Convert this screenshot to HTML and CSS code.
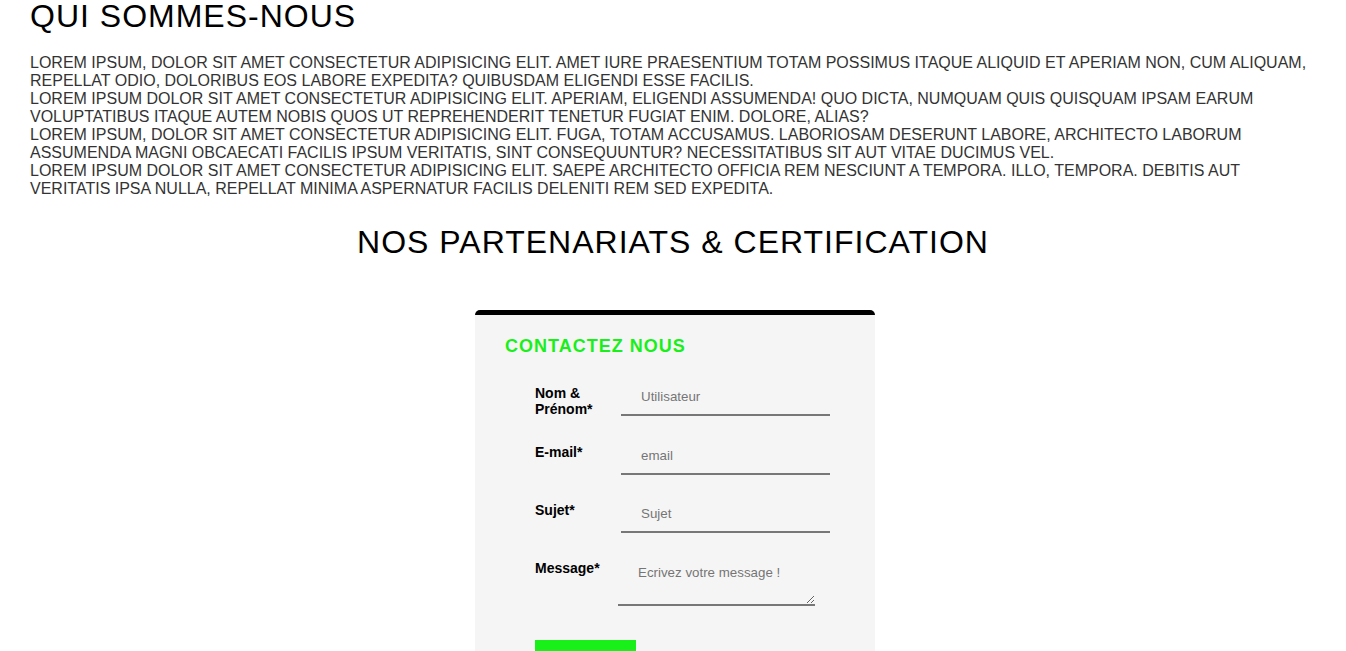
FILE: index.html
```html
<!DOCTYPE html>
<html lang="fr">
<head>
<meta charset="utf-8">
<title>Qui sommes-nous</title>
<link rel="stylesheet" href="styles.css">
</head>
<body>
<section class="about">
  <h1 class="about-title">QUI SOMMES-NOUS</h1>
  <div class="about-text">
    <p>Lorem ipsum, dolor sit amet consectetur adipisicing elit. Amet iure praesentium totam possimus itaque aliquid et aperiam non, cum aliquam, repellat odio, doloribus eos labore expedita? Quibusdam eligendi esse facilis.</p>
    <p>Lorem ipsum dolor sit amet consectetur adipisicing elit. Aperiam, eligendi assumenda! Quo dicta, numquam quis quisquam ipsam earum voluptatibus itaque autem nobis quos ut reprehenderit tenetur fugiat enim. Dolore, alias?</p>
    <p>Lorem ipsum, dolor sit amet consectetur adipisicing elit. Fuga, totam accusamus. Laboriosam deserunt labore, architecto laborum assumenda magni obcaecati facilis ipsum veritatis, sint consequuntur? Necessitatibus sit aut vitae ducimus vel.</p>
    <p>Lorem ipsum dolor sit amet consectetur adipisicing elit. Saepe architecto officia rem nesciunt a tempora. Illo, tempora. Debitis aut veritatis ipsa nulla, repellat minima aspernatur facilis deleniti rem sed expedita.</p>
  </div>
</section>
<section class="partners">
  <h2 class="partners-title">NOS PARTENARIATS &amp; CERTIFICATION</h2>
</section>
<section class="contact-wrap">
  <form class="contact">
    <h3 class="contact-title">CONTACTEZ NOUS</h3>
    <div class="row">
      <label class="lbl" for="nom">Nom &amp; Prénom*</label>
      <input class="field" id="nom" type="text" placeholder="Utilisateur">
    </div>
    <div class="row">
      <label class="lbl" for="email">E-mail*</label>
      <input class="field" id="email" type="email" placeholder="email">
    </div>
    <div class="row">
      <label class="lbl" for="sujet">Sujet*</label>
      <input class="field" id="sujet" type="text" placeholder="Sujet">
    </div>
    <div class="row">
      <label class="lbl" for="msg">Message*</label>
      <textarea class="area" id="msg" placeholder="Ecrivez votre message !"></textarea>
    </div>
    <button class="send" type="submit" aria-label="Envoyer"></button>
  </form>
</section>
</body>
</html>
```
FILE: styles.css
```css
html, body {
  margin: 0;
  padding: 0;
  background: #fff;
}
body {
  font-family: "Liberation Sans", Arial, sans-serif;
  color: #000;
}
.about {
  padding: 0 30px;
}
.about-title {
  margin: 0;
  font-size: 32px;
  font-weight: normal;
  line-height: 32px;
  letter-spacing: 1px;
}
.about-text {
  margin-top: 22px;
  color: #333;
  font-size: 16px;
  line-height: 18px;
  text-transform: uppercase;
}
.about-text p {
  margin: 0;
}
.partners {
  padding: 0 30px;
  margin-top: 28px;
}
.partners-title {
  margin: 0;
  text-align: center;
  font-size: 32px;
  font-weight: normal;
  line-height: 32px;
  letter-spacing: 1px;
}
.contact-wrap {
  margin-top: 52px;
  padding-left: 4px;
}
.contact {
  width: 400px;
  margin: 0 auto;
  box-sizing: border-box;
  background: #f5f5f5;
  border-top: 5px solid #000;
  border-radius: 5px 5px 0 0;
  padding: 21px 0 0 30px;
}
.contact-title {
  margin: 0 0 28px;
  font-size: 18px;
  font-weight: bold;
  color: #19ef19;
  line-height: 21px;
  letter-spacing: 1px;
}
.row {
  display: flex;
  align-items: flex-start;
  padding-left: 30px;
  margin-bottom: 27px;
}
.lbl {
  width: 86px;
  flex: none;
  font-size: 14px;
  font-weight: bold;
  line-height: 16px;
  padding-right: 20px;
  box-sizing: border-box;
}
.field {
  width: 209px;
  box-sizing: border-box;
  border: none;
  border-bottom: 2px solid #777;
  background: transparent;
  padding: 4px 0 10px 20px;
  margin: 0;
  font-family: "Liberation Sans", Arial, sans-serif;
  font-size: 13.333px;
  line-height: normal;
  outline: none;
}
.area {
  width: 197px;
  height: 46px;
  box-sizing: border-box;
  margin: 0 0 0 -3px;
  border: none;
  border-bottom: 2px solid #777;
  background: transparent;
  padding: 5px 0 0 20px;
  font-family: "Liberation Sans", Arial, sans-serif;
  font-size: 13.333px;
  line-height: normal;
  outline: none;
}
.field::placeholder,
.area::placeholder {
  color: #757575;
}
.send {
  display: block;
  margin: 34px 0 0 30px;
  width: 101px;
  height: 40px;
  padding: 0;
  border: none;
  background: #19ef19;
}
```
